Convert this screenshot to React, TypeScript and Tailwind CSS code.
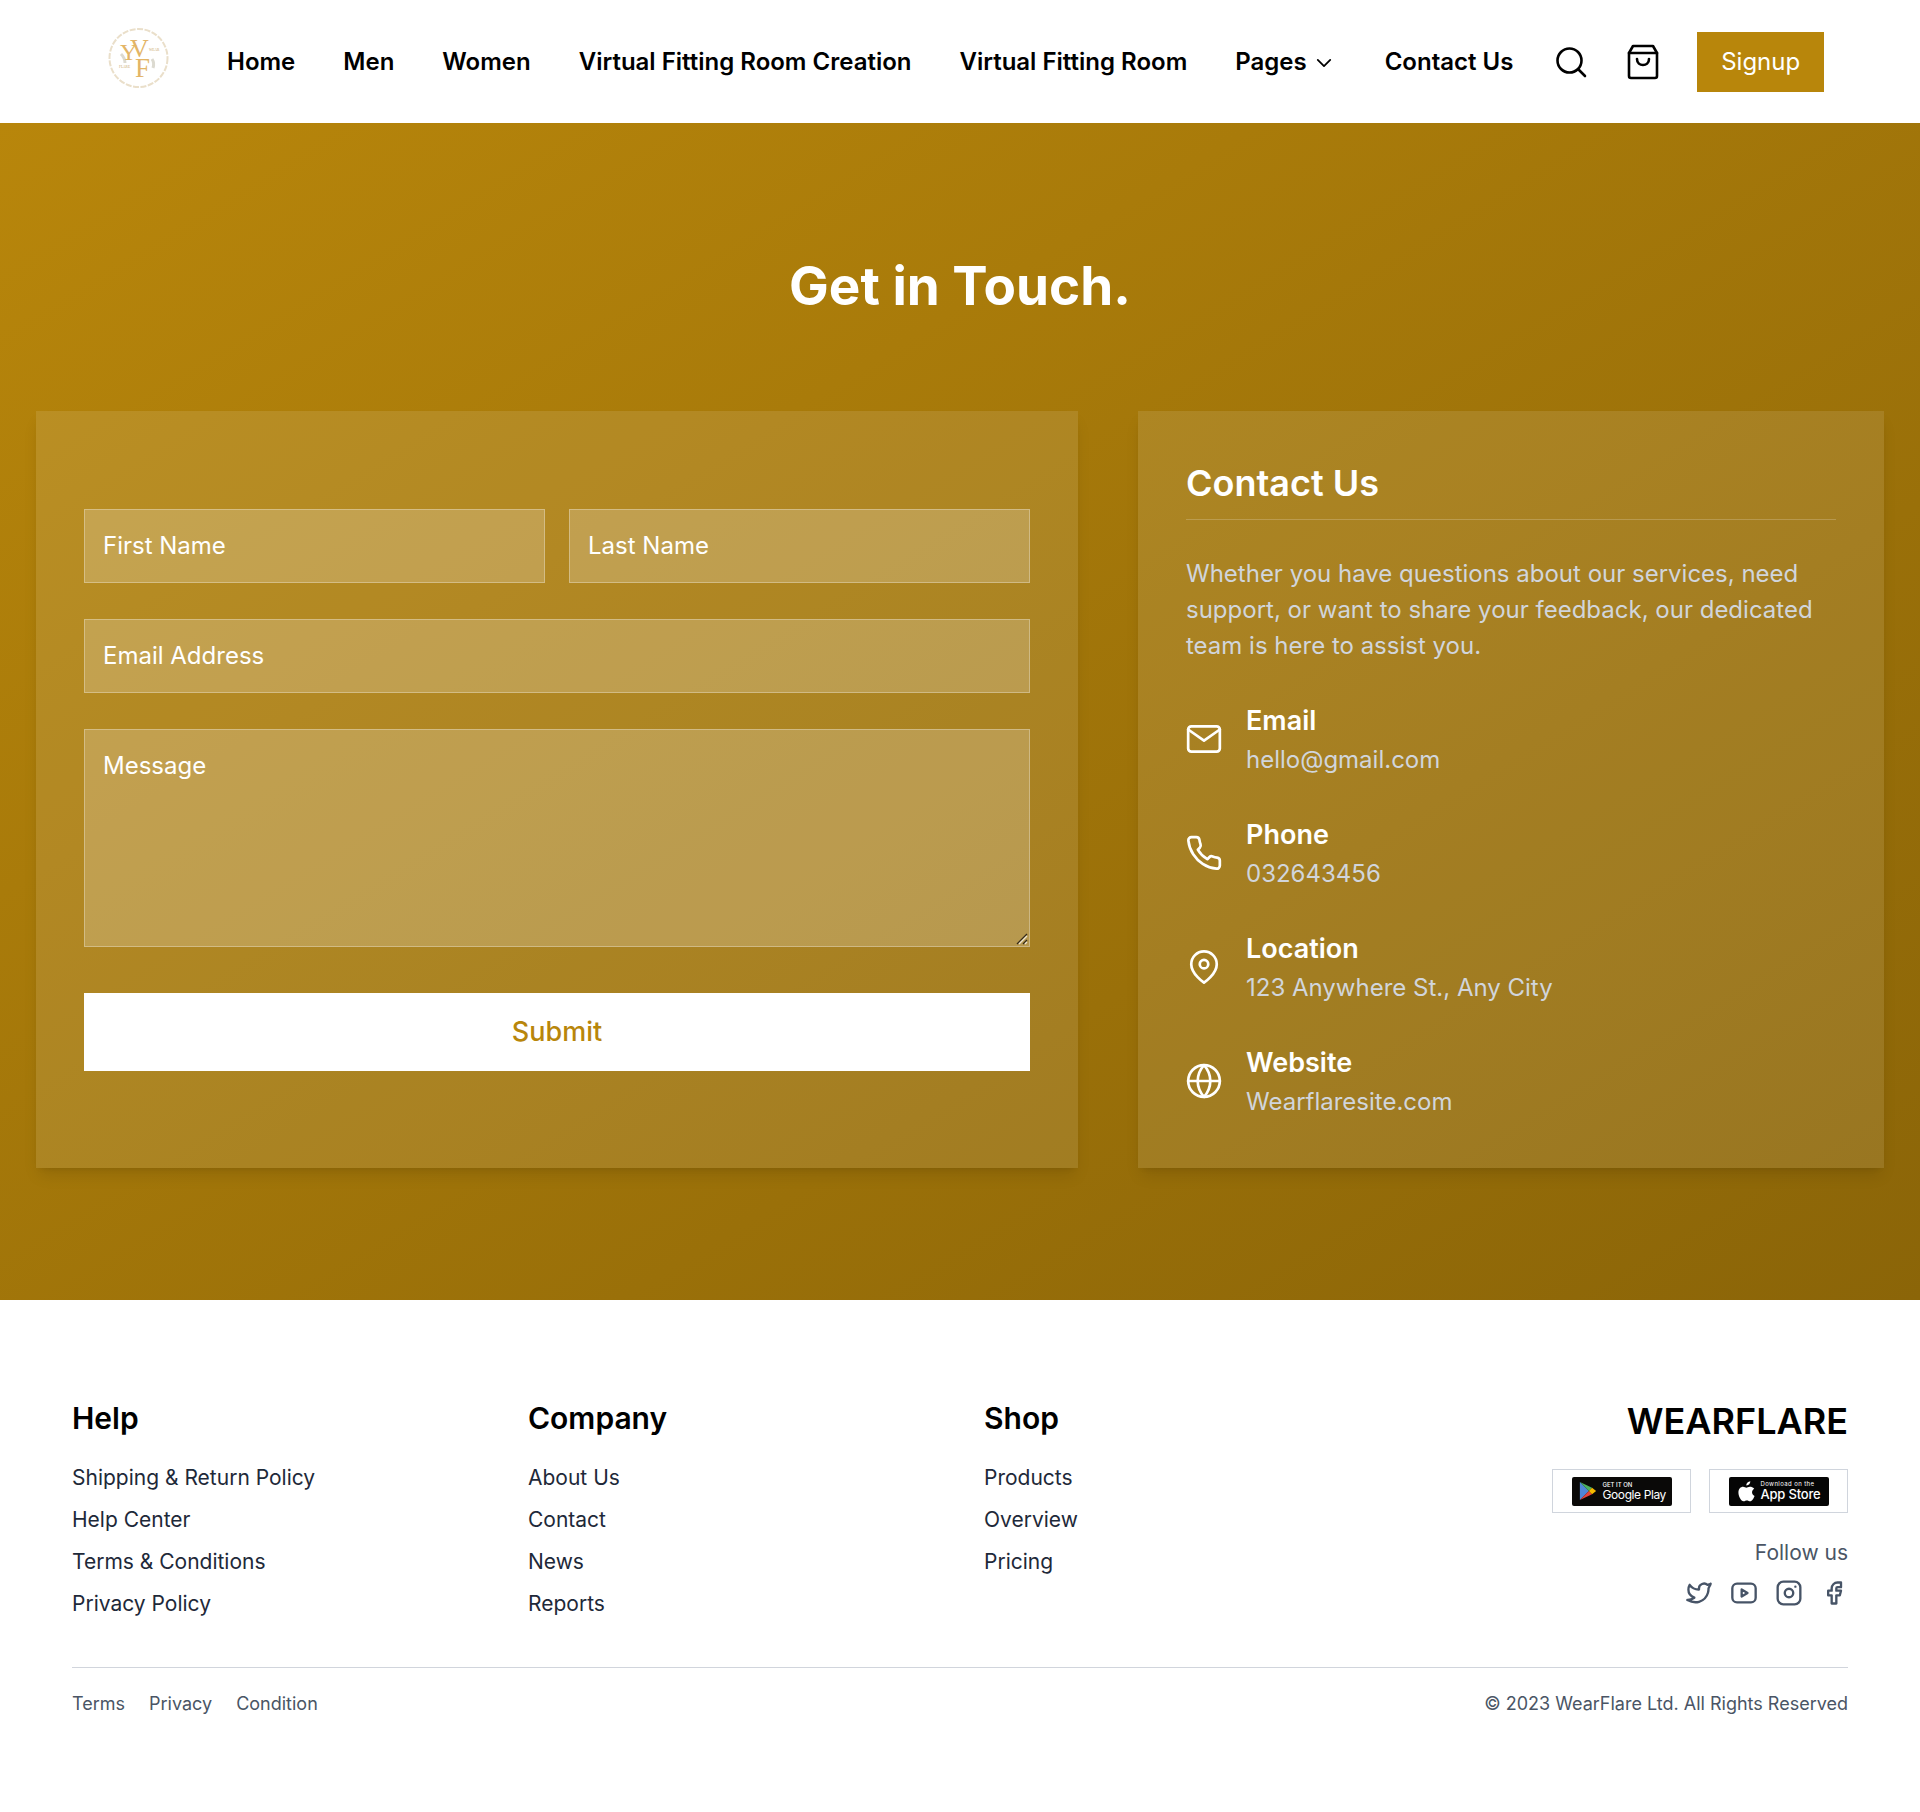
import React from "react";
import { FiGlobe, FiMail, FiMapPin, FiPhone } from "react-icons/fi";
import { TbBrandFacebook, TbBrandInstagram, TbBrandTwitter, TbBrandYoutube } from "react-icons/tb";

const navLinks = ["Home", "Men", "Women", "Virtual Fitting Room Creation", "Virtual Fitting Room"];

const contactItems = [
  { title: "Email", value: "hello@gmail.com", icon: <FiMail className="h-[38px] w-[38px] shrink-0" strokeWidth={1.7} /> },
  { title: "Phone", value: "032643456", icon: <FiPhone className="h-[38px] w-[38px] shrink-0" strokeWidth={1.7} /> },
  { title: "Location", value: "123 Anywhere St., Any City", icon: <FiMapPin className="h-[34px] w-[34px] shrink-0" strokeWidth={1.9} /> },
  { title: "Website", value: "Wearflaresite.com", icon: <FiGlobe className="h-[38px] w-[38px] shrink-0" strokeWidth={1.7} /> },
];

const footerColumns = [
  { title: "Help", links: ["Shipping & Return Policy", "Help Center", "Terms & Conditions", "Privacy Policy"] },
  { title: "Company", links: ["About Us", "Contact", "News", "Reports"] },
  { title: "Shop", links: ["Products", "Overview", "Pricing"] },
];

function Logo() {
  return (
    <svg viewBox="0 0 64 64" className="mb-[5px] h-16 w-16 shrink-0">
      <ellipse cx="32.500" cy="31" rx="29" ry="29" fill="none" stroke="#eadfca" strokeWidth="2" strokeDasharray="6 1.5" />
      <path d="M15 27c3 3 4 6 4 9M46 32c2 3 2 6 1 9" stroke="#dcdad0" strokeWidth="3" fill="none" />
      <text fontFamily="Liberation Serif, serif" fill="#e3b566">
        <tspan x="14" y="33" fontSize="24">Y</tspan>
        <tspan x="24" y="30" fontSize="26">V</tspan>
        <tspan x="29" y="50" fontSize="27">F</tspan>
        <tspan x="43" y="24" fontSize="3.500" fill="#c9a86a">WEAR</tspan>
        <tspan x="13" y="41" fontSize="3.500" fill="#c9a86a">FLARE</tspan>
      </text>
    </svg>
  );
}

function SearchIcon() {
  return (
    <svg viewBox="0 0 32 32" className="h-8 w-8" fill="none" stroke="#000" strokeWidth="2.6" strokeLinecap="round">
      <circle cx="14.500" cy="14.500" r="12" />
      <path d="M23.500 23.500 30 30" />
    </svg>
  );
}

function BagIcon() {
  return (
    <svg viewBox="0 0 32 36" className="h-[36px] w-8" fill="none" stroke="#000" strokeWidth="2.6" strokeLinecap="round" strokeLinejoin="round">
      <path d="M6 2h20l4 7v23a2 2 0 0 1-2 2H4a2 2 0 0 1-2-2V9z" />
      <path d="M2 9h28" />
      <path d="M10 15c0 8 12 8 12 0" />
    </svg>
  );
}

function GooglePlayBadge() {
  return (
    <div className="flex h-[29px] w-[100px] items-center gap-[6px] rounded-[2px] bg-[#0a0908] pl-[7px] text-white">
      <svg viewBox="0 0 20 22" className="h-5 w-[18px] shrink-0">
        <path d="M1 1v20l10-10z" fill="#4f86d8" />
        <path d="M1 1l10 10 3.500-3.500z" fill="#4caf60" />
        <path d="M1 21l10-10 3.500 3.500z" fill="#e5443c" />
        <path d="M14.500 7.500 19 11l-4.500 3.500L11 11z" fill="#f6b900" />
      </svg>
      <div className="flex flex-col">
        <span className="text-[6px] leading-[7px] font-medium">GET IT ON</span>
        <span className="text-[12px] leading-[14px] tracking-[-0.4px] whitespace-nowrap">Google Play</span>
      </div>
    </div>
  );
}

function AppStoreBadge() {
  return (
    <div className="flex h-[29px] w-[100px] items-center gap-[6px] rounded-[2px] bg-[#050505] pl-[9px] text-white">
      <svg viewBox="0 0 20 24" className="h-[21px] w-[17px] shrink-0" fill="#fff">
        <path d="M14.500 0c.2 2.800-2.300 5-4.600 4.800C9.600 2.300 12.200.2 14.500 0zM19.500 17.200c-1 2.500-3 6.300-5.200 6.300-1.400 0-2.100-.9-3.900-.9-1.800 0-2.500.9-3.900.9C3.700 23.500.5 17.600.5 13.200c0-4.300 2.700-6.700 5.400-6.700 1.700 0 3 1.100 4 1.100.9 0 2.500-1.300 4.500-1.100 1 0 3.300.4 4.700 2.400-3.700 2.300-3.200 6.900.4 8.300z" />
      </svg>
      <div className="flex flex-col">
        <span className="text-[6px] leading-[7px] tracking-[0.4px] whitespace-nowrap">Download on the</span>
        <span className="text-[13px] leading-[15px] font-medium tracking-[-0.2px] whitespace-nowrap">App Store</span>
      </div>
    </div>
  );
}

export default function App() {
  return (
    <div className="min-h-[1812px] bg-white font-['Inter',sans-serif] text-black">
      <header className="flex h-[123px] items-center pr-[96px] pl-[106px]">
        <Logo />
        <nav className="ml-[57px] flex items-center gap-[48px] text-[24px] leading-8 font-semibold">
          {navLinks.map((link) => (
            <a key={link} className="whitespace-nowrap">{link}</a>
          ))}
          <a className="flex items-center gap-[9px] whitespace-nowrap">
            Pages
            <svg viewBox="0 0 18 10" className="mt-[2px] h-[10px] w-[16px]" fill="none" stroke="#000" strokeWidth="2" strokeLinecap="round" strokeLinejoin="round">
              <path d="M2 1.500 9 8.500l7-7" />
            </svg>
          </a>
          <a className="ml-[5px] whitespace-nowrap">Contact Us</a>
        </nav>
        <div className="ml-[42px] flex items-center gap-[40px]">
          <SearchIcon />
          <BagIcon />
        </div>
        <button className="ml-[38px] h-[60px] w-[127px] bg-[#b8860b] text-[24px] font-normal text-white">Signup</button>
      </header>

      <main className="h-[1177px] bg-linear-to-br from-[#b8860b] to-[#8b6508] px-[36px] pt-[115px]">
        <h1 className="mb-[77px] text-center text-[53px] leading-[96px] font-bold text-white">Get in Touch.</h1>
        <div className="flex h-[757px] gap-[60px]">
          <form className="w-[1042px] bg-white/10 px-[48px] pt-[98px] shadow-lg">
            <div className="mb-[36px] flex gap-[24px]">
              <input placeholder="First Name" className="h-[74px] min-w-0 flex-1 border border-white/30 bg-white/20 px-[18px] pb-[2px] text-[24px] text-white outline-none placeholder:text-white" />
              <input placeholder="Last Name" className="h-[74px] min-w-0 flex-1 border border-white/30 bg-white/20 px-[18px] pb-[2px] text-[24px] text-white outline-none placeholder:text-white" />
            </div>
            <input placeholder="Email Address" className="mb-[36px] block h-[74px] w-full border border-white/30 bg-white/20 px-[18px] pb-[2px] text-[24px] text-white outline-none placeholder:text-white" />
            <div className="relative mb-[46px]">
              <textarea placeholder="Message" className="block h-[218px] w-full resize-none border border-white/30 bg-white/20 px-[18px] py-[18px] text-[24px] text-white outline-none placeholder:text-white" />
              <svg viewBox="0 0 12 12" className="pointer-events-none absolute right-[2px] bottom-[2px] h-3 w-3" fill="none" strokeWidth="1.300">
                <path d="M1 11 11 1M7 11l4-4" stroke="#33291a" />
                <path d="M3 11l8-8M9 11l2-2" stroke="#eee6d4" />
              </svg>
            </div>
            <button type="button" className="h-[78px] w-full bg-white text-[27px] font-medium text-[#b8860b]">Submit</button>
          </form>

          <section className="flex-1 bg-white/10 px-[48px] pt-[50px] shadow-lg">
            <h2 className="border-b border-white/20 pb-[13px] text-[36px] leading-[45px] font-semibold text-white">Contact Us</h2>
            <p className="mt-[36px] text-[24px] leading-[36px] text-[#d1d5db]">
              Whether you have questions about our services, need support, or want to share your feedback, our dedicated team is here to assist you.
            </p>
            <div className="mt-[36px] flex flex-col gap-[36px]">
              {contactItems.map((item) => (
                <div key={item.title} className="flex items-center gap-[24px]">
                  <div className="flex w-9 shrink-0 justify-center text-white">{item.icon}</div>
                  <div>
                    <div className="text-[27px] leading-[42px] font-semibold text-white">{item.title}</div>
                    <div className="text-[24px] leading-[36px] text-[#d1d5db]">{item.value}</div>
                  </div>
                </div>
              ))}
            </div>
          </section>
        </div>
      </main>

      <footer className="px-[72px] pt-[96px]">
        <div className="flex h-[272px] justify-between border-b border-gray-300">
          <div className="grid w-[1368px] grid-cols-3">
            {footerColumns.map((col) => (
              <div key={col.title}>
                <h3 className="text-[30px] leading-[44px] font-semibold">{col.title}</h3>
                <ul className="mt-[22px] flex flex-col gap-[10px] text-[21px] leading-[32px] text-gray-800">
                  {col.links.map((link) => (
                    <li key={link}>{link}</li>
                  ))}
                </ul>
              </div>
            ))}
          </div>
          <div className="flex flex-col items-end">
            <div className="pt-[3px] text-[36px] leading-[44px] font-semibold">WEARFLARE</div>
            <div className="mt-[26px] flex gap-[18px]">
              <div className="flex h-[44px] w-[139px] items-center justify-center border border-[#d0d5dd]"><GooglePlayBadge /></div>
              <div className="flex h-[44px] w-[139px] items-center justify-center border border-[#d0d5dd]"><AppStoreBadge /></div>
            </div>
            <div className="mt-[24px] text-[21px] leading-[32px] text-gray-600">Follow us</div>
            <div className="mt-[7px] flex items-center gap-[17px] text-[#475467]">
              <TbBrandTwitter className="h-7 w-7" />
              <TbBrandYoutube className="h-7 w-7" />
              <TbBrandInstagram className="-mx-[3px] h-[34px] w-[34px]" strokeWidth={1.65} />
              <TbBrandFacebook className="h-7 w-7" />
            </div>
          </div>
        </div>
        <div className="flex justify-between pt-[23px] text-[18px] leading-[26px] text-gray-600">
          <div className="flex gap-[24px]">
            <span>Terms</span>
            <span>Privacy</span>
            <span>Condition</span>
          </div>
          <span>© 2023 WearFlare Ltd. All Rights Reserved</span>
        </div>
      </footer>
    </div>
  );
}
